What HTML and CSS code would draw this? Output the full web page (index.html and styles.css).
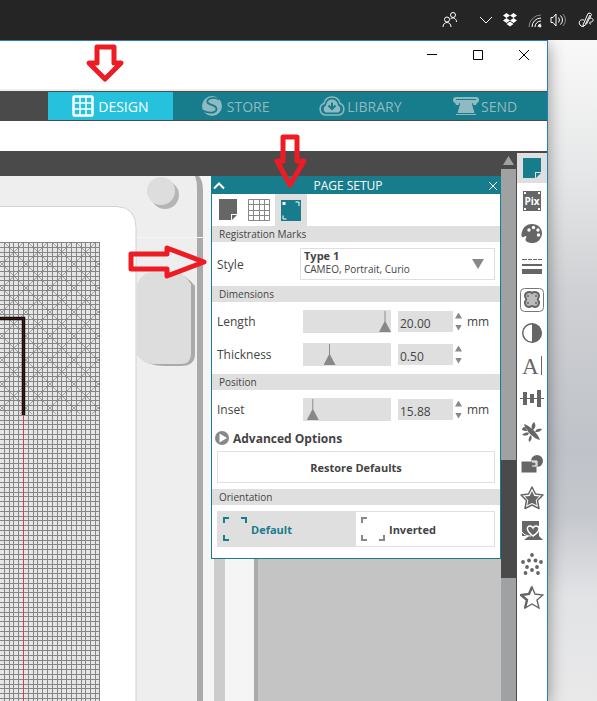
FILE: index.html
```
<!DOCTYPE html>
<html lang="en">
<head>
    <meta charset="UTF-8">
    <meta name="viewport" content="width=device-width, initial-scale=1.0">
    <title>Page Setup</title>
    <link rel="stylesheet" href="styles.css">
</head>
<body>
    <header class="taskbar">
        <svg class="people" width="16" height="16" viewBox="0 0 16 16"><circle cx="5" cy="7.500" r="2.500"/><path d="M1 15c0-6 8-6 8 0"/><circle cx="11" cy="3" r="2.500"/><path d="M8.500 7c2-2 6-1 6 3"/></svg>
        <svg width="16" height="16" viewBox="0 0 16 16"><path d="M2 5l6 6 6-6"/></svg>
        <svg class="solid" width="16" height="16" viewBox="0 0 16 16"><path d="M4.500 1L8 3.500 4.500 6 1 3.500zM11.500 1L15 3.500 11.500 6 8 3.500zM4.500 6L8 8.500 4.500 11 1 8.500zM11.500 6L15 8.500 11.500 11 8 8.500zM8 9.500l3.500 2.500L8 14.500 4.500 12z"/></svg>
        <svg width="16" height="16" viewBox="0 0 16 16"><path d="M3 15A12 12 0 0 1 15 3" opacity=".45"/><path d="M6 15a9 9 0 0 1 9-9M9 15a6 6 0 0 1 6-6M12 15a3 3 0 0 1 3-3"/><circle cx="14" cy="14" r="1" fill="#fff"/></svg>
        <svg width="20" height="16" viewBox="0 0 20 16"><path d="M1 5.500h2l3-3.500v12l-3-3.500H1zM8.500 5.500q2 2.500 0 5M10.500 3.500q4 4.500 0 9"/><path d="M13 2q5 6 0 12" opacity=".45"/></svg>
        <svg width="16" height="16" viewBox="0 0 16 16"><path d="M5 13L10 1.500q2.500-1.500 3.500 1L8.500 12 5 14.500zM7.500 12L12 3M6 8c-4-1-6 2-4 5 1 2 4 2 5 0M12 6c4 0 4 4 1 4-2 0-2 2 0 2"/></svg>
    </header>

    <div class="desktop">
        <div class="window">
            <div class="titlebar">
                <button aria-label="Minimize"><svg width="12" height="12" viewBox="0 0 12 12"><path d="M1 5.500h10"/></svg></button>
                <button aria-label="Maximize"><svg width="12" height="12" viewBox="0 0 12 12"><path d="M1.500 1.500h9v9h-9z"/></svg></button>
                <button aria-label="Close"><svg width="12" height="12" viewBox="0 0 12 12"><path d="M1 1l10 10M11 1L1 11"/></svg></button>
            </div>

            <nav class="modes">
                <a href="#design" class="mode active">
                    <svg width="22" height="22" viewBox="0 0 22 22"><rect x="1.500" y="1.500" width="19" height="19" rx="1" fill="none" stroke="currentColor" stroke-width="2.500"/><path d="M8 2v18M14 2v18M2 8h18M2 14h18" stroke="currentColor" stroke-width="1.500"/></svg>
                    DESIGN
                </a>
                <a href="#store" class="mode">
                    <svg width="22" height="22" viewBox="0 0 22 22"><circle cx="11" cy="11" r="10" fill="currentColor"/><path d="M18 4.500C12 1 5 4 6.500 7.500c1.500 3 9 2 9 6.500 0 4-7 5-14 1.500" fill="none" stroke="#177c8b" stroke-width="1.800"/></svg>
                    STORE
                </a>
                <a href="#library" class="mode tight">
                    <svg width="28" height="22" viewBox="0 0 28 22"><path d="M7 20a6 6 0 0 1-1-11.500C7 4 10 2 14 2s7 2 8 6.500A6 6 0 0 1 21 20z" fill="none" stroke="currentColor" stroke-width="1.500"/><path d="M7.500 17.500a4 4 0 0 1 .5-7c.5-4 3-6 6-6s5.500 2 6 6a4 4 0 0 1 .5 7z" fill="currentColor"/><path d="M14 7.500v6M10.500 10.500L14 14l3.500-3.500" stroke="#177c8b" stroke-width="2" fill="none"/></svg>
                    LIBRARY
                </a>
                <a href="#send" class="mode tight">
                    <svg width="28" height="22" viewBox="0 0 28 22"><rect x="1" y="2" width="26" height="6" rx="3" fill="currentColor"/><path d="M4 4.500h20" stroke="#177c8b"/><path d="M3 8h4v2H4zM25 8h-4v2h3zM8 8h12l3 10H5z" fill="currentColor"/><path d="M7.500 9L5 18M20.500 9l2.500 9" stroke="#177c8b"/><path d="M4 19.500h20" stroke="currentColor"/></svg>
                    SEND
                </a>
            </nav>

            <div class="workspace">
                <main class="stage">
                    <svg class="mat" width="100%" height="100%">
                        <defs>
                            <pattern id="grid" width="24" height="24" patternUnits="userSpaceOnUse" y="66">
                                <path d="M4.500 0v24M9.500 0v24M13.500 0v24M18.500 0v24M23.500 0v24M0 .5h24M0 5.500h24M0 10.500h24M0 14.500h24M0 19.500h24" stroke="#858585"/>
                            </pattern>
                            <pattern id="hatch" width="24" height="24" patternUnits="userSpaceOnUse" x="14" y="76">
                                <path d="M0 0l24 24M24 0L0 24" stroke="#777" stroke-width=".6"/>
                            </pattern>
                        </defs>
                        <!-- machine body and rails -->
                        <rect width="100%" height="100%" fill="#c4c4c4"/>
                        <rect width="258" height="100%" fill="#aaa"/>
                        <rect width="254" height="100%" fill="#f5f5f5"/>
                        <rect x="214" width="11" height="100%" fill="#ccc"/>
                        <path d="M190 0h9q4 5 4 15v2000h-13z" fill="#aaa"/>
                        <path d="M0 0h195q2 5 2 12v2000H0z" fill="#eee"/>
                        <path d="M130 61.500h73" stroke="#f5f5f5"/>
                        <circle cx="165" cy="19" r="14" fill="#b5b5b5"/>
                        <circle cx="161" cy="15" r="14" fill="#ddd"/>
                        <path d="M141 112q0-14 14-14h22q8 0 18 12v68q0 12-14 12h-16q-20 0-28-12z" fill="#aaa"/>
                        <path d="M137 108q6-12 15-12h23q8 0 16 12v70q0 10-10 10h-28q-10 0-16-10z" fill="#ddd"/>
                        <!-- cutting mat -->
                        <path d="M-1 30.500h118q19 1 19 21v2000H-1z" fill="#fff" stroke="#d2d2d2"/>
                        <rect y="66" width="100" height="100%" fill="#e6e6e6"/>
                        <rect y="66" width="100" height="100%" fill="url(#grid)"/>
                        <rect y="66" width="100" height="172" fill="url(#hatch)"/>
                        <path d="M99.500 66v2000" stroke="#858585"/>
                        <path d="M23.500 239v2000" stroke="#c44"/>
                        <path d="M0 142.500h23.500V239" fill="none" stroke="#111" stroke-width="3.500"/>
                        <path d="M0 142.500h23.500V239" fill="none" stroke="#4a1010"/>
                    </svg>

                    <section class="panel">
                        <header class="panel-head">
                            <button aria-label="Collapse"><svg width="12" height="12" viewBox="0 0 12 12"><path d="M1 8.500l5-5 5 5"/></svg></button>
                            <h1>PAGE SETUP</h1>
                            <button class="thin" aria-label="Close panel"><svg width="12" height="12" viewBox="0 0 12 12"><path d="M2 2l8 8M10 2l-8 8"/></svg></button>
                        </header>

                        <div class="tabs">
                            <button class="tab" aria-label="Page"><svg width="22" height="22" viewBox="0 0 22 22"><path d="M2 0h18v15h-6v6H2z" fill="#666"/><path d="M15 16h5l-5 5z" fill="#666"/></svg></button>
                            <button class="tab" aria-label="Grid"><svg width="22" height="22" viewBox="0 0 22 22"><path d="M.5.5h21v21H.5zM5.500 0v22M11.500 0v22M16.500 0v22M0 5.500h22M0 11.500h22M0 16.500h22" fill="none" stroke="#888"/></svg></button>
                            <button class="tab active" aria-label="Registration marks"><svg width="22" height="22" viewBox="0 0 22 22"><path d="M1 1h20v21H1z" fill="#177c8b"/><path d="M2.500 3h3v3h-3z" fill="#fff"/><path d="M15.500 3H19v4M3 16.500V20h3.500" fill="none" stroke="#fff"/></svg></button>
                        </div>

                        <h2>Registration Marks</h2>
                        <div class="row style-row">
                            <label for="style">Style</label>
                            <div class="picker">
                                <select id="style"><option>Type 1</option><option>Type 2</option></select>
                                <span class="hint">CAMEO, Portrait, Curio</span>
                                <svg class="caret" width="12" height="10" viewBox="0 0 12 10"><path d="M0 0h12L6 10z"/></svg>
                            </div>
                        </div>

                        <h2>Dimensions</h2>
                        <div class="rows">
                            <div class="row">
                                <label for="length">Length</label>
                                <input type="range" aria-label="Length slider" min="0" max="100" value="100">
                                <input type="text" id="length" value="20.00">
                                <div class="spin"><button class="up" aria-label="Increase length"></button><button class="down" aria-label="Decrease length"></button></div>
                                <span>mm</span>
                            </div>
                            <div class="row">
                                <label for="thickness">Thickness</label>
                                <input type="range" aria-label="Thickness slider" min="0" max="100" value="27">
                                <input type="text" id="thickness" value="0.50">
                                <div class="spin"><button class="up" aria-label="Increase thickness"></button><button class="down" aria-label="Decrease thickness"></button></div>
                            </div>
                        </div>

                        <h2>Position</h2>
                        <div class="rows">
                            <div class="row">
                                <label for="inset">Inset</label>
                                <input type="range" aria-label="Inset slider" min="0" max="100" value="5">
                                <input type="text" id="inset" value="15.88">
                                <div class="spin"><button class="up" aria-label="Increase inset"></button><button class="down" aria-label="Decrease inset"></button></div>
                                <span>mm</span>
                            </div>
                        </div>
                        <button class="advanced">
                            <svg width="14" height="14" viewBox="0 0 14 14"><circle cx="7" cy="7" r="7" fill="#888"/><path d="M4.500 2.500l7.500 4.500-7.500 4.500z" fill="#fff"/></svg>
                            Advanced Options
                        </button>
                        <button class="restore">Restore Defaults</button>

                        <h2>Orientation</h2>
                        <div class="orient">
                            <button class="active"><svg width="24" height="24" viewBox="0 0 24 24"><path d="M1 6V1H6M18 1h5V6M1 18v5H6"/></svg>Default</button>
                            <button><svg width="24" height="24" viewBox="0 0 24 24"><path d="M1 6V1H6M1 18v5H6M18 23h5V18"/></svg>Inverted</button>
                        </div>
                    </section>
                </main>

                <div class="scrollbar">
                    <div class="scroll-up"></div>
                    <div class="scroll-track"><div class="scroll-thumb"></div></div>
                </div>

                <aside class="tools">
                    <button class="active" aria-label="Page setup"><svg width="22" height="22" viewBox="0 0 22 22"><path d="M2 1h18v14h-6v6H2z" fill="#177c8b"/><path d="M15 16h5l-5 5z" fill="#177c8b"/></svg></button>
                    <button aria-label="PixScan"><svg width="22" height="22" viewBox="0 0 22 22"><path d="M2 1h18v20H2z"/><path d="M3 2h2v2H3zM17 2h2v2h-2zM3 18h2v2H3zM17 18h2v2h-2z" fill="#fff"/><text x="11" y="15" class="pix">Pix</text></svg></button>
                    <button aria-label="Fill"><svg width="22" height="22" viewBox="0 0 22 22"><path d="M11 1c6 0 10 4 10 9s-4 10-9 10-9-2-7-5c1-2 0-3-2-1-3 1-3-3-2-5 1-5 5-8 10-8z"/><g fill="#fff"><circle cx="8" cy="7" r="1.700"/><circle cx="12.500" cy="4.500" r="1.700"/><circle cx="17" cy="7" r="1.700"/><circle cx="17.500" cy="12" r="1.700"/></g></svg></button>
                    <button aria-label="Line style"><svg width="22" height="22" viewBox="0 0 22 22"><path d="M1 3h5v1H1zM7 3h4v1H7zM12 3h4v1h-4zM17 3h4v1h-4zM1 8h20v2H1zM1 13h20v5H1z"/></svg></button>
                    <button aria-label="Trace"><svg width="24" height="24" viewBox="0 0 24 24"><rect x=".5" y=".5" width="23" height="23" rx="4" fill="#fff" stroke="#777"/><path d="M12 5c2-2 7-1 7 3 0 2-2 3-1 4 2 2 1 7-3 7-1 0-2-1-3-1s-2 1-3 1c-4 0-5-5-3-7 1-1-1-2-1-4 0-4 5-5 7-3z" stroke="#666" stroke-width="2" fill="#bbb"/><circle cx="8" cy="8" r="1"/><circle cx="16" cy="8" r="1"/><circle cx="8" cy="15" r="1"/><circle cx="16" cy="15" r="1"/></svg></button>
                    <button aria-label="Contrast"><svg width="22" height="22" viewBox="0 0 22 22"><circle cx="11" cy="11" r="9.300" fill="#fff" stroke="#666" stroke-width="1.500"/><path d="M11 1.500a9.500 9.500 0 0 1 0 19z"/></svg></button>
                    <button aria-label="Text"><svg width="24" height="24" viewBox="0 0 24 24"><text x="2" y="20" class="letter">A</text><path d="M21 2h1v19h-1z"/></svg></button>
                    <button aria-label="Align"><svg width="24" height="22" viewBox="0 0 24 22"><path d="M0 10h24v1H0zM3 4h4v13H3zM10 6h4v9h-4zM17 2h4v17h-4z"/></svg></button>
                    <button aria-label="Replicate"><svg width="22" height="22" viewBox="0 0 22 22"><path d="M3 3c5 1 14 9 16 16-6-1-15-10-16-16zM13 1c2 3 2 5-1 8-2-2-2-5 1-8zM21 8c-2 3-4 3-7 3 1-3 3-4 7-3zM1 14c2-2 4-3 7-2-1 3-3 3-7 2zM8 21c-1-3 0-5 2-7 1 3 1 5-2 7zM4 6c-2 0-3 1-3 3 2 1 4 1 6 1z"/></svg></button>
                    <button aria-label="Modify"><svg width="22" height="22" viewBox="0 0 22 22"><circle cx="16" cy="7" r="6"/><path d="M0 7h16v12H0z" stroke="#fff"/><path d="M11 8h4v4h-4" fill="none" stroke="#fff"/></svg></button>
                    <button aria-label="Offset"><svg width="24" height="24" viewBox="0 0 24 24"><path d="M12 1l3.500 7 7.500 1-5.500 5.500 1.500 8-7-3.500-7 3.500 1.500-8L1 9l7.500-1z" fill="#fff" stroke="#666" stroke-width="1.500" stroke-linejoin="round"/><path d="M12 5l2.300 5 5 .5-3.600 3.800 1 5L12 17l-4.700 2.300 1-5-3.600-3.800 5-.5z"/></svg></button>
                    <button aria-label="Stipple"><svg width="22" height="22" viewBox="0 0 22 22"><path d="M1 1h17v15H1zM8 16h10l4 4H3z"/><path d="M1 12c2 3 5 4 9 4" fill="none" stroke="#fff"/><path d="M12 16c-8-6-6-10-3-10 2 0 3 2 3 2s1-2 3-2c4 0 5 5-3 10z" fill="#666" stroke="#fff" stroke-width="1.500"/></svg></button>
                    <button aria-label="Rhinestones"><svg width="22" height="22" viewBox="0 0 22 22"><circle cx="11" cy="2" r="1.900"/><circle cx="2" cy="9" r="1.900"/><circle cx="8" cy="7.500" r="1.900"/><circle cx="14.500" cy="7.500" r="1.900"/><circle cx="20" cy="9" r="1.900"/><circle cx="6" cy="14" r="1.900"/><circle cx="16" cy="14" r="1.900"/><circle cx="11" cy="17" r="1.900"/><circle cx="4.500" cy="20" r="1.900"/><circle cx="17" cy="20" r="1.900"/></svg></button>
                    <button aria-label="Sketch"><svg width="24" height="24" viewBox="0 0 24 24"><path d="M12 2l3 7 8 1-6 5 2 8-7-4-7 4 2-8-6-5 8-1z" fill="#fff" stroke="#666" stroke-width="1.400"/><path d="M12 2L9 9l-8 1 6 5-2 8" fill="none" stroke="#666" stroke-width="2.400"/></svg></button>
                </aside>
            </div>
        </div>
    </div>

    <svg class="arrows" width="210" height="282" viewBox="0 0 210 282">
        <path d="M97 47h17v16h7L105 79 89 63h8z"/>
        <path d="M283 137h14v24h7l-14 24-13-24h6z"/>
        <path d="M131 254h36v-6l37 14-37 14v-7h-36z"/>
    </svg>
</body>
</html>
```

FILE: styles.css
```
:root {
    --teal: #177c8b;
    --cyan: #26c1dd;
    --dark: #4a4a4a;
    --grey: #dfdfdf;
    --icon: #666;
    --text: #444;
}

* {
    box-sizing: border-box;
}

body {
    margin: 0;
    min-height: 100vh;
    display: flex;
    flex-direction: column;
    font-family: "Open Sans", "Noto Sans", sans-serif;
    font-size: 12px;
    color: var(--text);
}

button, input, select {
    font: inherit;
    color: inherit;
    border: none;
    border-radius: 0;
    padding: 0;
    margin: 0;
    background: none;
}

svg {
    display: block;
    flex: none;
}

/* taskbar */
.taskbar {
    height: 40px;
    background: #252525;
    display: flex;
    align-items: center;
    justify-content: flex-end;
    gap: 8px;
    padding-right: 3px;
}

.taskbar svg {
    fill: none;
    stroke: #fff;
}

.taskbar .solid {
    fill: #fff;
    stroke: none;
}

.people {
    margin-right: 12px;
}

.desktop {
    flex: 1;
    display: flex;
    padding-right: 49px;
    overflow: hidden;
    background: linear-gradient(#f9f9f9 0, #e6e7e8 20%, #cfd1d4 38%, #bfc2c8 62%, #c5c8cd 72%, #e2e3e5 84%, #e9e9ea 100%);
}

/* app window */
.window {
    flex: 1;
    min-width: 0;
    display: flex;
    flex-direction: column;
    background: #fff;
    border-top: 1px solid #2a7fb0;
    border-right: 1px solid #2a7fb0;
    box-shadow: 0 4px 16px rgba(0, 0, 0, 0.4);
}

.titlebar {
    height: 50px;
    display: flex;
    justify-content: flex-end;
    border-bottom: 2px solid #eee;
}

.titlebar button {
    width: 46px;
    height: 28px;
    display: grid;
    place-items: center;
}

.titlebar path {
    fill: none;
    stroke: #000;
}

.modes {
    height: 30px;
    display: flex;
    padding: 1px 0 1px 48px;
    background: var(--dark);
}

.mode {
    flex: 1;
    display: flex;
    align-items: center;
    justify-content: center;
    gap: 4px;
    font-size: 14px;
    color: #8fbac1;
    background: var(--teal);
    text-decoration: none;
}

.mode.tight {
    gap: 1px;
}

.mode.active {
    background: var(--cyan);
    color: #fff;
}

.workspace {
    flex: 1;
    display: flex;
    margin-top: 30px;
    background: var(--dark);
}

.stage {
    flex: 1;
    min-width: 0;
    position: relative;
    margin-top: 25px;
}

.mat {
    position: absolute;
    inset: 0;
}

/* page setup panel, floats over the mat */
.panel {
    position: absolute;
    top: 0;
    right: 0;
    width: 290px;
    padding-bottom: 11px;
    background: #fff;
    border: 1px solid var(--teal);
}

.panel-head {
    height: 17px;
    display: flex;
    align-items: center;
    justify-content: space-between;
    padding: 0 1px;
    background: var(--teal);
    color: #fff;
}

.panel-head h1 {
    margin: 0;
    padding-right: 16px;
    font-size: 12px;
    line-height: 16px;
    font-weight: normal;
}

.panel-head path {
    fill: none;
    stroke: #fff;
    stroke-width: 2;
}

.panel-head .thin path {
    stroke-width: 1;
}

.tabs {
    display: flex;
    height: 32px;
}

.tab {
    width: 32px;
    display: grid;
    place-items: center;
}

.tab:first-child {
    width: 31px;
}

.tab.active {
    background: var(--grey);
}

.panel h2 {
    margin: 0;
    padding-left: 7px;
    background: var(--grey);
    font-size: 10px;
    line-height: 16px;
    font-weight: normal;
}

.rows {
    padding: 3px 0;
}

.row {
    display: flex;
    align-items: center;
    height: 33px;
    padding: 0 5px;
}

.row label {
    width: 86px;
}

.style-row {
    height: 44px;
}

.style-row label {
    width: 83px;
}

.picker {
    flex: 1;
    position: relative;
}

.picker select {
    display: block;
    width: 100%;
    height: 32px;
    appearance: none;
    padding: 0 3px 16px;
    border: 1px solid var(--grey);
    background: #fff;
    font-size: 11px;
    line-height: 14px;
    font-weight: bold;
}

.hint {
    position: absolute;
    left: 4px;
    bottom: 4px;
    font-size: 10px;
    line-height: 14px;
    pointer-events: none;
}

.caret {
    position: absolute;
    right: 11px;
    top: 11px;
    fill: #888;
    pointer-events: none;
}

input[type="range"] {
    appearance: none;
    width: 88px;
    height: 23px;
    margin-right: 7px;
    background: var(--grey);
}

input[type="range"]::-webkit-slider-thumb {
    appearance: none;
    width: 12px;
    height: 21px;
    background: #888;
    clip-path: polygon(46% 0, 54% 0, 54% 50%, 100% 100%, 0 100%, 46% 50%);
}

input[type="text"] {
    width: 55px;
    height: 21px;
    padding: 3px 2px 0;
    background: var(--grey);
}

.spin {
    width: 14px;
    display: flex;
    flex-direction: column;
    gap: 6px;
    padding-left: 2px;
}

.spin button {
    width: 7px;
    height: 6px;
    background: #888;
}

.up {
    clip-path: polygon(50% 0, 100% 100%, 0 100%);
}

.down {
    clip-path: polygon(0 0, 100% 0, 50% 100%);
}

.advanced {
    display: flex;
    align-items: center;
    gap: 4px;
    height: 18px;
    margin-left: 3px;
    font-weight: bold;
}

.restore {
    display: block;
    width: calc(100% - 10px);
    height: 32px;
    margin: 4px 5px 6px;
    border: 1px solid var(--grey);
    font-size: 11px;
    font-weight: bold;
}

.orient {
    display: flex;
    margin: 6px 5px 0;
    border: 1px solid var(--grey);
}

.orient button {
    flex: 1;
    height: 34px;
    display: flex;
    align-items: center;
    gap: 4px;
    padding-left: 5px;
    font-size: 11px;
    font-weight: bold;
}

.orient svg {
    fill: none;
    stroke: #888;
    stroke-width: 2;
}

.orient .active {
    background: var(--grey);
    color: var(--teal);
}

.orient .active svg {
    stroke: var(--teal);
}

/* scrollbar */
.scrollbar {
    width: 16px;
    display: flex;
    flex-direction: column;
    padding-right: 1px;
}

.scroll-up {
    width: 11px;
    height: 9px;
    margin: 5px 2px 4px;
    background: #a0a1a2;
    clip-path: polygon(50% 0, 100% 100%, 0 100%);
}

.scroll-track {
    flex: 1;
    padding-top: 291px;
    background: #a0a1a2;
}

.scroll-thumb {
    height: 118px;
    background: var(--dark);
}

/* right toolbar */
.tools {
    width: 30px;
    display: flex;
    flex-direction: column;
    gap: 3px;
    border-top: 2px solid var(--dark);
    background: #fff;
}

.tools button {
    height: 30px;
    display: grid;
    place-items: center;
}

.tools .active {
    background: var(--grey);
}

.tools svg {
    fill: var(--icon);
}

.tools .pix {
    fill: #fff;
    font-size: 10px;
    font-weight: bold;
    text-anchor: middle;
}

.letter {
    font-family: "Liberation Serif", serif;
    font-size: 23px;
}

/* callout arrows drawn over everything */
.arrows {
    position: absolute;
    top: 0;
    left: 0;
    overflow: visible;
    pointer-events: none;
    fill: none;
    stroke: #ed1c24;
    stroke-width: 5;
    stroke-linejoin: round;
}
```
